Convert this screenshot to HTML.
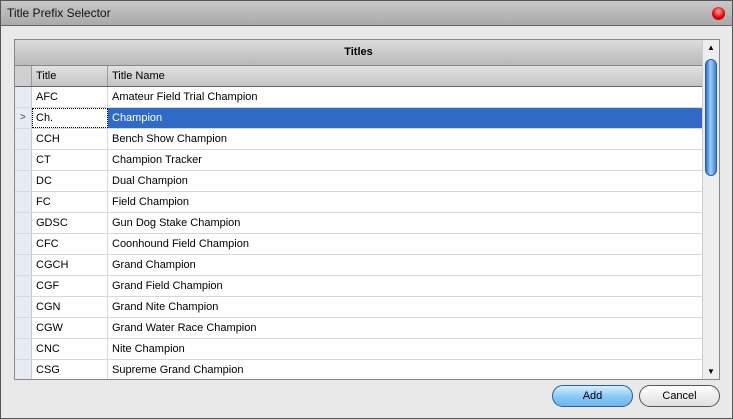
<!DOCTYPE html>
<html><head><style>
*{margin:0;padding:0;box-sizing:border-box}
body{width:733px;height:419px;overflow:hidden;background:#e9e9e9;font-family:"Liberation Sans",sans-serif;font-size:11px;color:#000;position:relative;border:1px solid #555}
.tb{position:absolute;left:0;top:0;width:731px;height:25px;background:linear-gradient(#c8c8c8,#a9a9a9);border-bottom:1px solid #666;font-size:12px;padding:5px 0 0 6px;color:#111}
.cl{position:absolute;right:7px;top:6px;width:13px;height:13px;border-radius:50%;background:radial-gradient(circle at 50% 35%,#ffb0b0,#e00 55%,#900)}
.grid{position:absolute;left:13px;top:38px;width:706px;height:341px;border:1px solid #888;background:#fff;overflow:hidden}
.th{position:absolute;left:0;top:0;width:687px;height:26px;background:linear-gradient(#dcdcdc,#b9b9b9);border-bottom:1px solid #888;text-align:center;font-weight:bold;line-height:25px}
.ch{position:absolute;left:0;top:26px;width:687px;height:21px;background:linear-gradient(#e2e2e2,#c4c4c4);border-bottom:1px solid #666}
.ch div,.r div{position:absolute;top:0;height:100%;padding-left:4px;line-height:20px}
.r{position:absolute;left:0;width:687px;height:21px;border-bottom:1px solid #d8d8d8}
.ind{left:0;width:17px;background:#e6ebf4;border-right:1px solid #c9c9c9}
.c1{left:17px;width:76px;border-right:1px solid #d8d8d8}
.c2{left:93px;width:594px}
.ch .ind{background:#cfcfcf;border-right:1px solid #999}
.ch .c1{border-right:1px solid #999}
.sel .c2{background:#316ac5;color:#fff}
.sb{position:absolute;left:687px;top:0;width:17px;height:339px;background:#eee;border-left:1px solid #ccc}
.thumb{position:absolute;left:2px;top:19px;width:12px;height:117px;border-radius:6px;background:linear-gradient(90deg,#2a6fc8,#9fd0ff 45%,#3a82d8);border:1px solid #2a5fa8}
.btn{position:absolute;top:384px;height:22px;border-radius:11px;border:1px solid #555;text-align:center;line-height:20px;font-size:11px}
</style></head><body>
<div class="tb">Title Prefix Selector</div><div class="cl"></div>
<div class="grid">
<div class="th">Titles</div>
<div class="ch"><div class="ind"></div><div class="c1">Title</div><div class="c2">Title Name</div></div>
<div class="r" style="top:47px"><div class="ind"></div><div class="c1">AFC</div><div class="c2">Amateur Field Trial Champion</div></div>
<div class="r sel" style="top:68px"><div class="ind" style="color:#444;font-size:10px;padding-left:5px">&gt;</div><div class="c1" style="outline:1px dotted #000;outline-offset:-1px">Ch.</div><div class="c2">Champion</div></div>
<div class="r" style="top:89px"><div class="ind"></div><div class="c1">CCH</div><div class="c2">Bench Show Champion</div></div>
<div class="r" style="top:110px"><div class="ind"></div><div class="c1">CT</div><div class="c2">Champion Tracker</div></div>
<div class="r" style="top:131px"><div class="ind"></div><div class="c1">DC</div><div class="c2">Dual Champion</div></div>
<div class="r" style="top:152px"><div class="ind"></div><div class="c1">FC</div><div class="c2">Field Champion</div></div>
<div class="r" style="top:173px"><div class="ind"></div><div class="c1">GDSC</div><div class="c2">Gun Dog Stake Champion</div></div>
<div class="r" style="top:194px"><div class="ind"></div><div class="c1">CFC</div><div class="c2">Coonhound Field Champion</div></div>
<div class="r" style="top:215px"><div class="ind"></div><div class="c1">CGCH</div><div class="c2">Grand Champion</div></div>
<div class="r" style="top:236px"><div class="ind"></div><div class="c1">CGF</div><div class="c2">Grand Field Champion</div></div>
<div class="r" style="top:257px"><div class="ind"></div><div class="c1">CGN</div><div class="c2">Grand Nite Champion</div></div>
<div class="r" style="top:278px"><div class="ind"></div><div class="c1">CGW</div><div class="c2">Grand Water Race Champion</div></div>
<div class="r" style="top:299px"><div class="ind"></div><div class="c1">CNC</div><div class="c2">Nite Champion</div></div>
<div class="r" style="top:320px"><div class="ind"></div><div class="c1">CSG</div><div class="c2">Supreme Grand Champion</div></div>
<div class="sb"><div style="position:absolute;top:3px;width:16px;text-align:center;font-size:8px">▲</div><div class="thumb"></div><div style="position:absolute;bottom:3px;width:16px;text-align:center;font-size:8px">▼</div></div>
</div>
<div class="btn" style="left:551px;width:81px;background:linear-gradient(#d8efff,#8ccaf8 50%,#6cb6f0);border-color:#2a5f98">Add</div>
<div class="btn" style="left:638px;width:81px;background:linear-gradient(#fff,#eee 50%,#e0e0e0)">Cancel</div>
</body></html>
